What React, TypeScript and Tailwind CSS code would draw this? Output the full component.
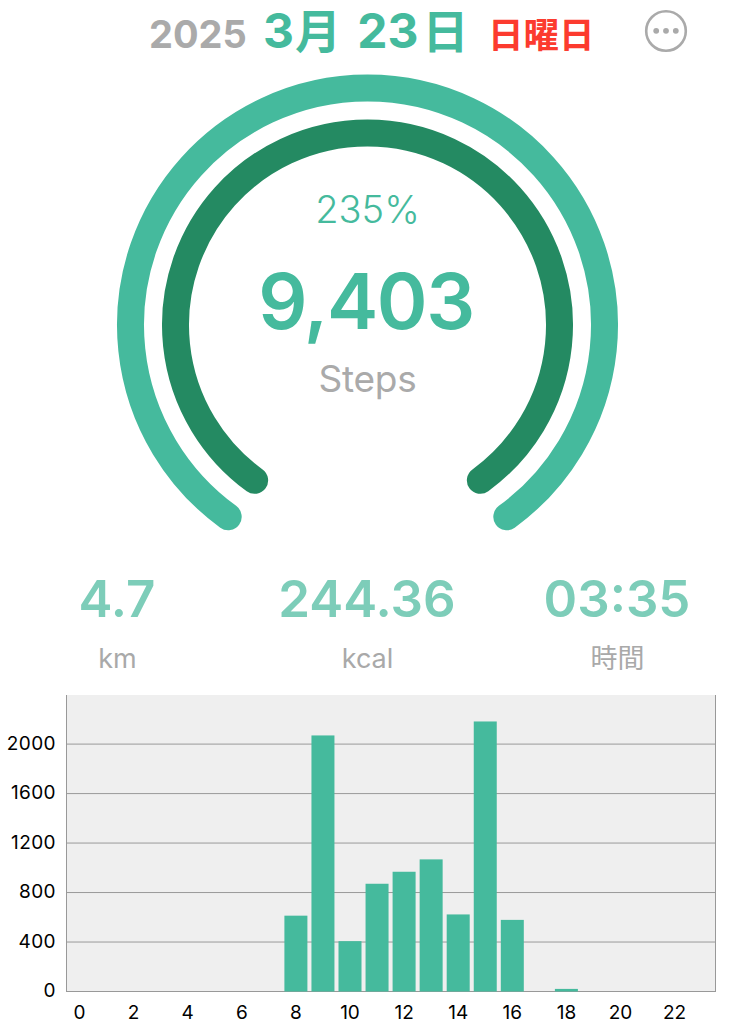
import React from 'react';

interface HourlySteps {
  hour: number;
  steps: number;
}

interface StatProps {
  value: string;
  unit: string;
}

const HOURLY: HourlySteps[] = [
  { hour: 8, steps: 613 },
  { hour: 9, steps: 2070 },
  { hour: 10, steps: 407 },
  { hour: 11, steps: 871 },
  { hour: 12, steps: 968 },
  { hour: 13, steps: 1068 },
  { hour: 14, steps: 623 },
  { hour: 15, steps: 2183 },
  { hour: 16, steps: 579 },
  { hour: 18, steps: 21 },
];

const Y_TICKS = [0, 400, 800, 1200, 1600, 2000];
const X_TICKS = [0, 2, 4, 6, 8, 10, 12, 14, 16, 18, 20, 22];

// Arc open at the bottom, 36 degrees to each side of straight down.
const arcPath = (cx: number, cy: number, r: number) => {
  const gap = Math.PI / 5;
  const dx = r * Math.sin(gap);
  const dy = r * Math.cos(gap);
  return `M ${cx - dx} ${cy + dy} A ${r} ${r} 0 1 1 ${cx + dx} ${cy + dy}`;
};

const MoreIcon: React.FC<{ className?: string }> = ({ className }) => (
  <svg viewBox="0 0 44 44" className={className} fill="currentColor">
    <circle cx="22" cy="22" r="19.8" fill="none" stroke="currentColor" strokeWidth="2.6" />
    <circle cx="12.2" cy="21.8" r="2.9" />
    <circle cx="22" cy="21.8" r="2.9" />
    <circle cx="31.8" cy="21.8" r="2.9" />
  </svg>
);

const Header: React.FC = () => (
  <header className="flex h-[62px] items-start pl-[149px]">
    <h1 className="flex h-[62px] items-baseline whitespace-nowrap font-bold leading-[62px]">
      <span className="w-[114px] text-[38px] text-[#aaaaaa]">2025</span>
      <span className="w-[225px] text-[48px] text-[#45ba9d]">
        3<span className="ml-px mr-[5px] text-[46px]">月</span> 23<span className="ml-[4px] text-[46px]">日</span>
      </span>
      <span className="text-[35.5px] text-[#fc3b2f]">日曜日</span>
    </h1>
    <button className="ml-auto mr-[47px] mt-[9px] text-[#aaaaaa]" aria-label="More">
      <MoreIcon className="h-11 w-11" />
    </button>
  </header>
);

const StepDial: React.FC = () => (
  <section className="relative h-[500px]">
    <svg viewBox="0 0 735 500" className="h-[500px] w-full" fill="none" strokeWidth="27" strokeLinecap="round">
      <path d={arcPath(367.5, 263, 237)} stroke="#45ba9d" />
      <path d={arcPath(367.5, 263, 192)} stroke="#248a62" />
    </svg>
    <div className="absolute inset-x-0 top-[123px] flex flex-col items-center">
      <p className="text-[38px] font-light leading-[48px] text-[#45ba9d]">235%</p>
      <p className="mr-[3px] mt-[20px] text-[77px] font-semibold leading-[96px] tracking-[-1.4px] text-[#45ba9d]">9,403</p>
      <p className="mt-[6px] text-[37px] leading-[48px] tracking-[-0.2px] text-[#aaaaaa]">Steps</p>
    </div>
  </section>
);

const Stat: React.FC<StatProps> = ({ value, unit }) => (
  <div className="flex flex-col items-center">
    <span className="mr-px text-[51px] font-semibold leading-[60px] text-[#7dcdb9]">{value}</span>
    <span className="mt-[10px] text-[27px] leading-[40px] text-[#a9a9a9]">{unit}</span>
  </div>
);

const HourlyChart: React.FC = () => {
  const baseline = 307.5;
  const toY = (steps: number) => baseline - steps * 0.1237;
  const toX = (hour: number) => 79.5 + hour * 27.05;

  return (
    <svg viewBox="0 0 735 340" className="h-[340px] w-[735px]">
      <rect x="66.5" y="11" width="649" height="296.5" fill="#efefef" />
      {Y_TICKS.map(tick => (
        <g key={tick}>
          <line x1="66" x2="716" y1={toY(tick)} y2={toY(tick)} stroke="#999999" />
          <text x="56" y={toY(tick) + 5.5} textAnchor="end" fontSize="19" letterSpacing="0.4">{tick}</text>
        </g>
      ))}
      {HOURLY.map(({ hour, steps }) => (
        <rect key={hour} x={toX(hour) - 11.5} y={toY(steps)} width="23" height={baseline - toY(steps)} fill="#45ba9d" />
      ))}
      <path d="M66.5 11V308M715.5 11V308" stroke="#999999" />
      {X_TICKS.map(tick => (
        <text key={tick} x={toX(tick)} y="335" textAnchor="middle" fontSize="19">{tick}</text>
      ))}
    </svg>
  );
};

export default function App() {
  return (
    <main lang="ja" className="h-[1024px] w-[735px] overflow-hidden bg-white font-['Inter','Noto_Sans_CJK_JP',sans-serif]">
      <Header />
      <StepDial />
      <section className="grid h-[122px] grid-cols-[235px_265px_235px] pt-[7px]">
        <Stat value="4.7" unit="km" />
        <Stat value="244.36" unit="kcal" />
        <Stat value="03:35" unit="時間" />
      </section>
      <HourlyChart />
    </main>
  );
}
